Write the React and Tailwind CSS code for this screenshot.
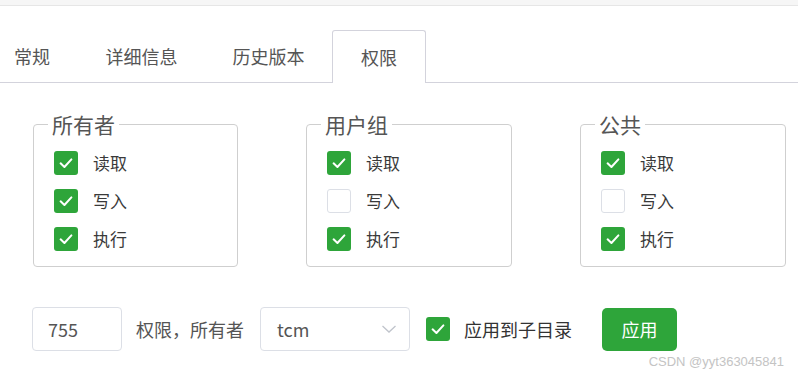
import { useState } from "react"

const font = { fontFamily: '"Noto Sans CJK SC", "Noto Sans", sans-serif' }

function CheckBox({ checked }) {
    return (
        <span
            className={`flex h-[24px] w-[24px] shrink-0 items-center justify-center rounded-[3px] ${
                checked ? "bg-[#2ea53a]" : "border border-[#dcdfe6] bg-white"
            }`}
        >
            {checked && (
                <svg width="18" height="18" viewBox="0 0 16 16" fill="none">
                    <path d="M3.2 8.3 L6.6 11.5 L12.8 4.8" stroke="#fff" strokeWidth="1.8" strokeLinecap="round" strokeLinejoin="round" />
                </svg>
            )}
        </span>
    )
}

function PermGroup({ title, perms, width }) {
    const labels = ["读取", "写入", "执行"]
    return (
        <fieldset className={`${width} rounded-[4px] border border-[#cfcfcf] px-[20px] pb-[8px]`}>
            <legend className="ml-[-6px] px-[4px] text-[21px] leading-[24px] text-[#555]">{title}</legend>
            <div className="pt-[8px]">
                {labels.map((label, i) => (
                    <div key={label} className="flex h-[38px] items-center gap-[15px]">
                        <CheckBox checked={perms[i]} />
                        <span className="text-[17px] text-[#3a3a3a]">{label}</span>
                    </div>
                ))}
            </div>
        </fieldset>
    )
}

export default function App() {
    const [tab] = useState(3)
    const tabs = [
        { name: "常规", cls: "w-[78px] pl-[14px] justify-start" },
        { name: "详细信息", cls: "w-[127px] justify-center" },
        { name: "历史版本", cls: "w-[127px] justify-center" },
        { name: "权限", cls: "w-[94px] justify-center" },
    ]

    return (
        <div className="relative h-[374px] w-[798px] overflow-hidden bg-white" style={font}>
            <div className="h-[6px] border-b border-[#e6e6e6] bg-[#f6f6f6]" />

            <div className="mt-[24px] flex h-[53px] border-b border-[#d3d3dc]">
                {tabs.map((t, i) => (
                    <div
                        key={t.name}
                        className={`flex items-center text-[18px] text-[#555] ${t.cls} ${
                            i === tab ? "mb-[-1px] rounded-t-[3px] border border-b-0 border-[#d3d3dc] bg-white text-[#333]" : ""
                        }`}
                    >
                        {t.name}
                    </div>
                ))}
            </div>

            <div className="mt-[29px] flex gap-[68px] pl-[33px]">
                <PermGroup title="所有者" width="w-[205px]" perms={[true, true, true]} />
                <PermGroup title="用户组" width="w-[206px]" perms={[true, false, true]} />
                <PermGroup title="公共" width="w-[206px]" perms={[true, false, true]} />
            </div>

            <div className="mt-[40px] flex items-center pl-[32px]">
                <div className="flex h-[44px] w-[90px] items-center rounded-[4px] border border-[#dcdfe6] pl-[15px] text-[18px] text-[#555]">
                    755
                </div>
                <span className="ml-[14px] text-[18px] text-[#555]">权限，所有者</span>
                <div className="ml-[16px] flex h-[44px] w-[150px] items-center justify-between rounded-[4px] border border-[#dcdfe6] pl-[16px] pr-[12px] text-[18px] text-[#555]">
                    <span>tcm</span>
                    <svg width="16" height="10" viewBox="0 0 16 10" fill="none">
                        <path d="M1.5 2 L8 8 L14.5 2" stroke="#c0c4cc" strokeWidth="1.3" />
                    </svg>
                </div>
                <div className="ml-[16px]">
                    <CheckBox checked />
                </div>
                <span className="ml-[14px] text-[18px] text-[#333]">应用到子目录</span>
                <button className="ml-[30px] flex h-[43px] w-[75px] items-center justify-center rounded-[5px] bg-[#2ea53a] text-[18px] text-white">
                    应用
                </button>
            </div>

            <div className="absolute bottom-[6px] right-[14px] text-[13px] leading-none text-[#c4c4c4]" style={{ fontFamily: '"Liberation Sans", sans-serif' }}>
                CSDN @yyt363045841
            </div>
        </div>
    )
}
